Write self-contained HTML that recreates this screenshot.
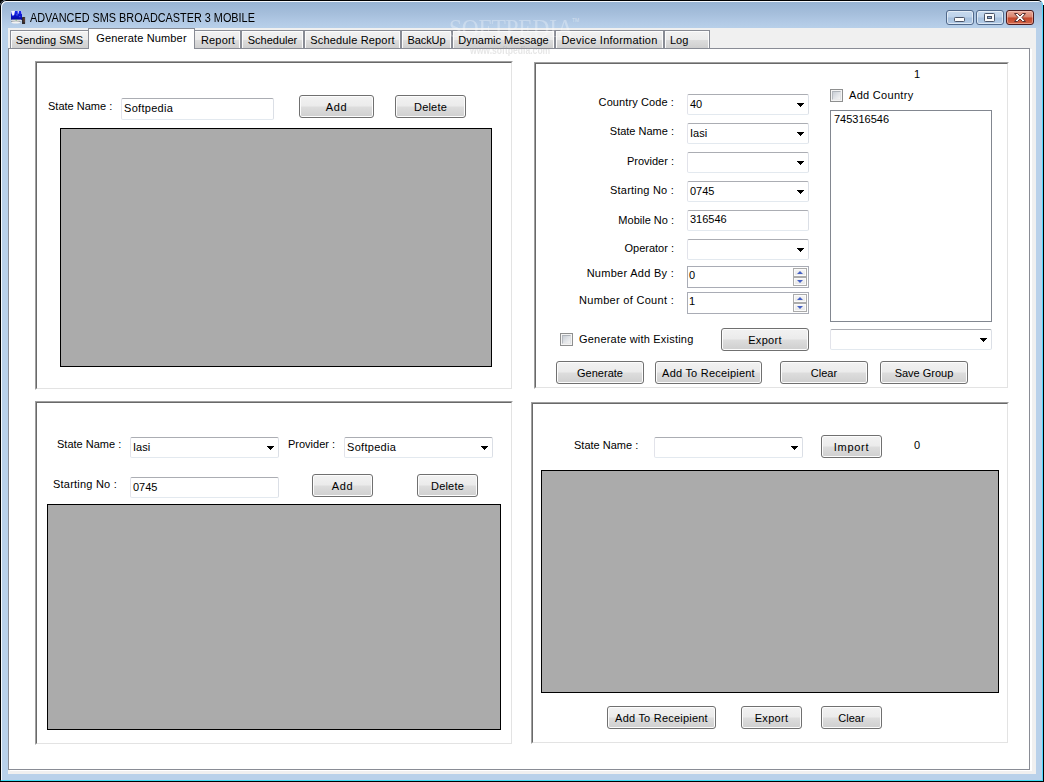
<!DOCTYPE html>
<html><head><meta charset="utf-8"><title>ADVANCED SMS BROADCASTER 3 MOBILE</title>
<style>
html,body{margin:0;padding:0;}
body{width:1044px;height:782px;overflow:hidden;position:relative;background:#000;font-family:"Liberation Sans",sans-serif;font-size:11px;color:#000;}
.abs,.abs *{box-sizing:border-box;}
#win{position:absolute;left:0;top:0;width:1043px;height:781px;background:#b9d1ea;border-radius:6px 5px 0 0;overflow:hidden;}
#titlegrad{position:absolute;left:0;top:0;width:1043px;height:30px;background:linear-gradient(#97b2d1 0,#99b5d4 3px,#a5bedb 13px,#b1c9e5 22px,#b9d1ea 29px);}
#edge{position:absolute;left:0;top:0;width:1043px;height:781px;border:1px solid #000;border-bottom-color:#3fdcf4;border-right-color:#4fd8ff;border-radius:6px 5px 0 0;box-sizing:border-box;box-shadow:inset 1px 1px 0 #f4f8fc;}
#title{position:absolute;left:30px;top:11px;font-size:12px;line-height:14px;white-space:nowrap;transform-origin:0 0;transform:scaleX(.905);}
#client{position:absolute;left:8px;top:28px;width:1028px;height:746px;background:#f0f0f0;}
#page{position:absolute;left:8px;top:48px;width:1022px;height:722px;background:#fff;border:1px solid #898c95;box-sizing:border-box;box-shadow:2px 1px 0 #fff;}
.tab{position:absolute;top:30px;height:18px;box-sizing:border-box;border:1px solid #898c95;border-bottom:none;background:linear-gradient(#f2f2f2 0,#ebebeb 9px,#dddddd 9px,#cfcfcf 100%);box-shadow:inset 1px 1px 0 #fcfcfc,inset -1px 0 0 #fcfcfc;text-align:center;line-height:19px;white-space:nowrap;}
.tab.sel{top:28px;height:21px;background:#fff;box-shadow:none;line-height:18px;z-index:2;}
.gb{position:absolute;box-sizing:border-box;border:1px solid;border-color:#a0a0a0 #fff #fff #a0a0a0;}
.gb:before{content:"";position:absolute;left:0;top:0;right:0;bottom:0;border:1px solid;border-color:#696969 #e3e3e3 #e3e3e3 #696969;}
.grid{position:absolute;box-sizing:border-box;background:#ababab;border:1px solid #000;}
.lbl{position:absolute;white-space:nowrap;line-height:13px;}
.r{text-align:right;}
.tb{position:absolute;box-sizing:border-box;background:#fff;border:1px solid;border-color:#abadb3 #dbdfe6 #e3e9ef #e2e3ea;border-radius:2px;padding:0 0 0 2px;white-space:nowrap;}
.cb{position:absolute;box-sizing:border-box;background:#fff;border:1px solid;border-color:#abadb3 #dbdfe6 #e3e9ef #e2e3ea;border-radius:2px;padding:0 0 0 2px;white-space:nowrap;}
.cb:after{content:"";position:absolute;right:4px;top:8px;width:7px;height:4px;background:linear-gradient(#000,#000) 0 0/7px 1px no-repeat,linear-gradient(#000,#000) 1px 1px/5px 1px no-repeat,linear-gradient(#000,#000) 2px 2px/3px 1px no-repeat,linear-gradient(#000,#000) 3px 3px/1px 1px no-repeat;}
.btn{position:absolute;box-sizing:border-box;border:1px solid #707070;border-radius:3px;background:linear-gradient(#f2f2f2 0,#ebebeb 48%,#dddddd 52%,#cfcfcf 100%);box-shadow:inset 0 0 0 1px #fcfcfc;text-align:center;white-space:nowrap;}
.chk{position:absolute;width:13px;height:13px;box-sizing:border-box;border:1px solid #8e8f8f;background:#f4f4f4;}
.chk:before{content:"";position:absolute;left:1px;top:1px;width:9px;height:9px;box-sizing:border-box;border:1px solid;border-color:#aeb3b9 #dfe1e4 #e9e9ea #b6bac0;background:linear-gradient(135deg,#c8cdd4 0,#dfe2e6 50%,#f3f3f3 100%);}
.lb{position:absolute;box-sizing:border-box;background:#fff;border:1px solid #828790;padding:2px 0 0 3px;}
.spin{position:absolute;box-sizing:border-box;background:#fff;border:1px solid #a9acb5;padding:0 0 0 1px;white-space:nowrap;}
.ud{position:absolute;right:1px;top:1px;width:14px;height:18px;}
.ud:before,.ud:after{content:"";position:absolute;left:0;width:14px;height:9px;box-sizing:border-box;border:1px solid #ababab;background:linear-gradient(#f6f6f6,#e6e6e6);box-shadow:inset 0 0 0 1px #fbfbfb;}
.ud:before{top:0;}
.ud:after{top:9px;}
.ud b{position:absolute;left:4px;z-index:2;border:3px solid transparent;width:0;height:0;}
.ud b.u{top:0px;border-bottom:3px solid #4560c4;border-top:none;top:3px;}
.ud b.d{top:12px;border-top:3px solid #4560c4;border-bottom:none;}

.cbtn{position:absolute;top:10px;width:28px;height:15px;box-sizing:border-box;border:1px solid #50688a;border-radius:3px;background:linear-gradient(#c6d9ee 0,#bdd2ea 48%,#a6c0de 52%,#b3cbe6 100%);box-shadow:inset 0 0 0 1px rgba(255,255,255,.55);}
.cbtn.x{border-color:#4a1a1e;background:linear-gradient(#e8a898 0,#d9826c 48%,#c4452a 52%,#d2674a 100%);box-shadow:inset 0 0 0 1px rgba(255,220,210,.45);}
.cbtn svg{position:absolute;left:0;top:0;}
#wm1{position:absolute;left:449px;top:15px;font-family:"Liberation Serif",serif;font-size:26px;line-height:28px;color:rgba(255,255,255,.30);letter-spacing:-.2px;white-space:nowrap;z-index:5;transform-origin:0 0;transform:scaleX(.9);}
#wm2{position:absolute;left:470px;top:44px;font-size:11px;line-height:12px;color:rgba(150,150,150,.24);white-space:nowrap;z-index:5;font-weight:bold;transform-origin:0 0;transform:scaleX(.78);}
#wm3{position:absolute;left:572px;top:17px;font-size:5px;line-height:6px;color:rgba(255,255,255,.45);z-index:5;}
</style></head>
<body>
<div style="position:absolute;left:1036px;top:0;width:8px;height:5px;background:#fff"></div>
<div id="win" class="abs">
 <div id="titlegrad"></div>
 <div id="title">ADVANCED SMS BROADCASTER 3 MOBILE</div>
 <div id="client"></div>
 <div id="page"></div>
 <div id="tabs">
  <div class="tab" style="left:10px;width:80px;padding-right:1px">Sending SMS</div>
  <div class="tab sel" style="left:88px;width:107px;letter-spacing:0.16px">Generate Number</div>
  <div class="tab" style="left:193px;width:48px;letter-spacing:0.19px;padding-left:2px">Report</div>
  <div class="tab" style="left:241px;width:63px">Scheduler</div>
  <div class="tab" style="left:304px;width:97px;letter-spacing:0.16px">Schedule Report</div>
  <div class="tab" style="left:401px;width:51px;letter-spacing:-0.1px">BackUp</div>
  <div class="tab" style="left:452px;width:103px">Dynamic Message</div>
  <div class="tab" style="left:555px;width:109px;letter-spacing:0.25px">Device Information</div>
  <div class="tab" style="left:664px;width:46px;text-align:left;padding-left:5px">Log</div>
 </div>

 <!-- top-left panel -->
 <div class="gb" style="left:35px;top:61px;width:478px;height:329px"></div>
 <div class="lbl" style="left:48px;top:100px">State Name :</div>
 <div class="tb" style="left:121px;top:98px;width:153px;height:22px;line-height:18px;letter-spacing:0.3px">Softpedia</div>
 <div class="btn" style="left:299px;top:95px;width:75px;height:23px;line-height:23px;letter-spacing:.7px">Add</div>
 <div class="btn" style="left:395px;top:95px;width:71px;height:23px;line-height:23px;letter-spacing:.2px">Delete</div>
 <div class="grid" style="left:60px;top:128px;width:432px;height:239px"></div>

 <!-- top-right panel -->
 <div class="gb" style="left:534px;top:62px;width:475px;height:327px"></div>
 <div class="lbl" style="left:911px;top:68px;width:12px;text-align:center">1</div>
 <div class="lbl r" style="left:560px;top:96px;width:114px;letter-spacing:0.1px">Country Code :</div>
 <div class="cb" style="left:687px;top:94px;width:122px;height:21px;line-height:19px">40</div>
 <div class="lbl r" style="left:560px;top:125px;width:114px">State Name :</div>
 <div class="cb" style="left:687px;top:123px;width:122px;height:21px;line-height:19px">Iasi</div>
 <div class="lbl r" style="left:560px;top:155px;width:114px">Provider :</div>
 <div class="cb" style="left:687px;top:152px;width:122px;height:21px;line-height:19px"></div>
 <div class="lbl r" style="left:560px;top:184px;width:114px;letter-spacing:0.22px">Starting No :</div>
 <div class="cb" style="left:687px;top:181px;width:122px;height:21px;line-height:19px">0745</div>
 <div class="lbl r" style="left:560px;top:214px;width:114px">Mobile No :</div>
 <div class="tb" style="left:687px;top:210px;width:122px;height:21px;line-height:17px">316546</div>
 <div class="lbl r" style="left:560px;top:242px;width:114px">Operator :</div>
 <div class="cb" style="left:687px;top:239px;width:122px;height:21px;line-height:19px"></div>
 <div class="lbl r" style="left:560px;top:267px;width:114px;letter-spacing:0.28px">Number Add By :</div>
 <div class="spin" style="left:687px;top:266px;width:122px;height:22px;line-height:16px">0<i class="ud"><b class="u"></b><b class="d"></b></i></div>
 <div class="lbl r" style="left:560px;top:294px;width:114px;letter-spacing:0.3px">Number of Count :</div>
 <div class="spin" style="left:687px;top:292px;width:122px;height:22px;line-height:16px">1<i class="ud"><b class="u"></b><b class="d"></b></i></div>
 <div class="chk" style="left:560px;top:333px"></div>
 <div class="lbl" style="left:579px;top:333px;letter-spacing:.2px">Generate with Existing</div>
 <div class="btn" style="left:721px;top:328px;width:88px;height:23px;line-height:23px;letter-spacing:.3px">Export</div>
 <div class="btn" style="left:556px;top:361px;width:88px;height:23px;line-height:23px">Generate</div>
 <div class="btn" style="left:655px;top:361px;width:107px;height:23px;line-height:23px;letter-spacing:0.22px">Add To Receipient</div>
 <div class="btn" style="left:780px;top:361px;width:88px;height:23px;line-height:23px">Clear</div>
 <div class="btn" style="left:880px;top:361px;width:88px;height:23px;line-height:23px">Save Group</div>
 <div class="chk" style="left:830px;top:89px"></div>
 <div class="lbl" style="left:849px;top:89px;letter-spacing:0.3px">Add Country</div>
 <div class="lb" style="left:830px;top:110px;width:162px;height:212px;line-height:13px">745316546</div>
 <div class="cb" style="left:830px;top:329px;width:162px;height:21px;line-height:19px"></div>

 <!-- bottom-left panel -->
 <div class="gb" style="left:35px;top:401px;width:478px;height:344px"></div>
 <div class="lbl" style="left:57px;top:438px">State Name :</div>
 <div class="cb" style="left:130px;top:437px;width:149px;height:21px;line-height:19px">Iasi</div>
 <div class="lbl" style="left:288px;top:438px">Provider :</div>
 <div class="cb" style="left:344px;top:437px;width:149px;height:21px;line-height:19px;letter-spacing:0.3px">Softpedia</div>
 <div class="lbl" style="left:53px;top:478px;letter-spacing:0.22px">Starting No :</div>
 <div class="tb" style="left:130px;top:477px;width:149px;height:21px;line-height:19px">0745</div>
 <div class="btn" style="left:312px;top:474px;width:61px;height:23px;line-height:23px;letter-spacing:.7px">Add</div>
 <div class="btn" style="left:417px;top:474px;width:61px;height:23px;line-height:23px;letter-spacing:.2px">Delete</div>
 <div class="grid" style="left:47px;top:504px;width:454px;height:226px"></div>

 <!-- bottom-right panel -->
 <div class="gb" style="left:531px;top:402px;width:478px;height:342px"></div>
 <div class="lbl" style="left:574px;top:439px">State Name :</div>
 <div class="cb" style="left:654px;top:437px;width:149px;height:21px;line-height:19px"></div>
 <div class="btn" style="left:821px;top:435px;width:61px;height:23px;line-height:23px;letter-spacing:.7px">Import</div>
 <div class="lbl" style="left:911px;top:439px;width:12px;text-align:center">0</div>
 <div class="grid" style="left:541px;top:470px;width:458px;height:223px"></div>
 <div class="btn" style="left:607px;top:706px;width:109px;height:23px;line-height:23px;letter-spacing:0.22px">Add To Receipient</div>
 <div class="btn" style="left:741px;top:706px;width:61px;height:23px;line-height:23px;letter-spacing:.3px">Export</div>
 <div class="btn" style="left:821px;top:706px;width:61px;height:23px;line-height:23px">Clear</div>

 <svg class="abs" style="position:absolute;left:9px;top:9px;filter:blur(.35px)" width="18" height="17" viewBox="0 0 18 17">
  <defs><linearGradient id="scr" x1="0" y1="0" x2="0" y2="1"><stop offset="0" stop-color="#1c2cf4"/><stop offset=".55" stop-color="#0a14c8"/><stop offset="1" stop-color="#06089a"/></linearGradient></defs>
  <rect x="2" y="2" width="11" height="9" fill="url(#scr)"/>
  <path d="M2 2 L6 2 L5.200 5.800 L3.800 7 L2.600 4.500 Z" fill="#fff" opacity=".95"/>
  <path d="M8.600 2 L10 2 L9.600 4.600 L8.800 5 Z" fill="#fff" opacity=".85"/>
  <path d="M12 2 L13 2 L13 5 L12.400 5 Z" fill="#dfe4ff" opacity=".8"/>
  <rect x="7.600" y="5" width=".8" height="1.600" fill="#8c9cff" opacity=".8"/>
  <rect x="10.400" y="7" width=".9" height="1.200" fill="#8090f0" opacity=".7"/>
  <rect x="2.300" y="10.600" width="10" height="1.400" fill="#e4e4e4"/>
  <rect x="6.600" y="10.500" width="1.200" height=".9" fill="#38a838"/>
  <rect x="2.300" y="11.900" width="9" height=".9" fill="#5a5a5a" opacity=".8"/>
  <ellipse cx="6.800" cy="13.400" rx="4.300" ry="1.100" fill="#f2f2f2"/>
  <rect x="13" y="8" width="3.100" height="7" rx=".6" fill="#2e2a2c"/>
  <rect x="14.600" y="8.600" width="1" height="4.600" fill="#7a4a3c" opacity=".9"/>
 </svg>
 <div class="cbtn" style="left:946px"><svg width="26" height="13" viewBox="0 0 26 13"><rect x="7.5" y="6.5" width="10" height="4" rx=".8" fill="#fbfbfb" stroke="#4a5468" stroke-width="1"/></svg></div>
 <div class="cbtn" style="left:976px"><svg width="26" height="13" viewBox="0 0 26 13"><rect x="7.500" y="2.500" width="10" height="8" rx=".8" fill="#fbfbfb" stroke="#4a5468" stroke-width="1"/><rect x="10.500" y="5.500" width="4" height="2" fill="#8faad0" stroke="#4a5468" stroke-width="1"/></svg></div>
 <div class="cbtn x" style="left:1006px"><svg width="26" height="13" viewBox="0 0 26 13"><path d="M7.500 2.500 L10.500 2.500 L13 5 L15.500 2.500 L18.500 2.500 L15 6.500 L18.500 10.500 L15.500 10.500 L13 8 L10.500 10.500 L7.500 10.500 L11 6.500 Z" fill="#fbfbfb" stroke="#5a3030" stroke-width="1" stroke-linejoin="round"/></svg></div>
 <div id="wm1">SOFTPEDIA</div><div id="wm3">TM</div>
 <div id="wm2">www.softpedia.com</div>
 <div id="edge"></div>
</div>
</body></html>
